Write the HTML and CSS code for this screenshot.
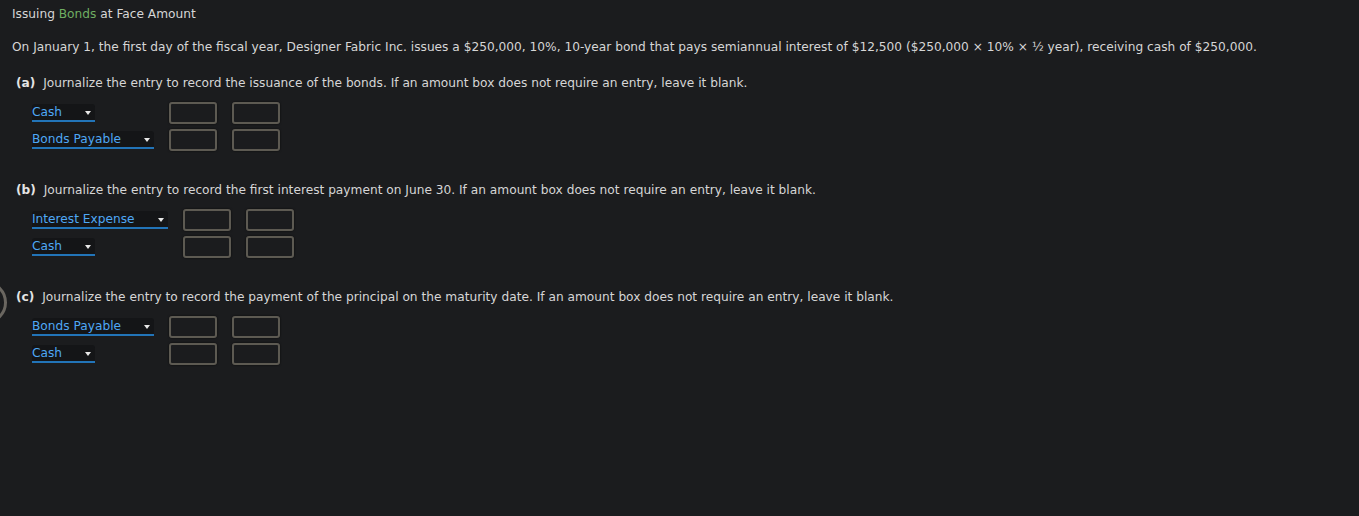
FILE: index.html
```html
<!DOCTYPE html>
<html>
<head>
<meta charset="utf-8">
<link rel="stylesheet" href="styles.css">
</head>
<body>
<div class="page">
  <div class="title">Issuing <span class="term">Bonds</span> at Face Amount</div>
  <p class="intro">On January 1, the first day of the fiscal year, Designer Fabric Inc. issues a $250,000, 10%, 10-year bond that pays semiannual interest of $12,500 ($250,000 × 10% × ½ year), receiving cash of $250,000.</p>

  <section class="part part-a">
    <div class="q"><b>(a)</b> Journalize the entry to record the issuance of the bonds. If an amount box does not require an entry, leave it blank.</div>
    <div class="journal">
      <div class="sel">Cash</div><div class="amt"></div><div class="amt"></div>
      <div class="sel">Bonds Payable</div><div class="amt"></div><div class="amt"></div>
    </div>
  </section>

  <section class="part part-b">
    <div class="q"><b>(b)</b> Journalize the entry to record the first interest payment on June 30. If an amount box does not require an entry, leave it blank.</div>
    <div class="journal">
      <div class="sel">Interest Expense</div><div class="amt"></div><div class="amt"></div>
      <div class="sel">Cash</div><div class="amt"></div><div class="amt"></div>
    </div>
  </section>

  <section class="part part-c">
    <div class="ring"></div>
    <div class="q"><b>(c)</b> Journalize the entry to record the payment of the principal on the maturity date. If an amount box does not require an entry, leave it blank.</div>
    <div class="journal">
      <div class="sel">Bonds Payable</div><div class="amt"></div><div class="amt"></div>
      <div class="sel">Cash</div><div class="amt"></div><div class="amt"></div>
    </div>
  </section>
</div>
</body>
</html>
```

FILE: styles.css
```css
html, body {
  margin: 0;
  padding: 0;
  background: #1b1c1e;
}
body {
  font-family: "DejaVu Sans", Verdana, sans-serif;
  font-size: 12.2px;
  color: #d6d6d6;
  height: 516px;
  overflow: hidden;
}
.page {
  padding: 7px 12px 0 12px;
}
.title {
  line-height: 15px;
}
.term {
  color: #6fae62;
}
.intro {
  margin: 18px 0 0 0;
  line-height: 15px;
}
.part {
  position: relative;
}
.part-a { margin-top: 21px; }
.part-b { margin-top: 32px; }
.part-c { margin-top: 32px; }
.q {
  padding-left: 4px;
  line-height: 15px;
}
.q b {
  font-weight: bold;
  color: #e4e4e4;
  margin-right: 4px;
}
.journal {
  display: grid;
  grid-template-columns: max-content 48px 48px;
  column-gap: 15px;
  row-gap: 5px;
  margin: 11px 0 0 20px;
  align-items: center;
  justify-items: start;
}
.sel {
  position: relative;
  color: #4fa8f5;
  line-height: 16px;
  padding: 0 33px 0 0;
  border-bottom: 2px solid #2274b8;
  border-radius: 3px 3px 0 0;
  background: #141517;
}
.sel::after {
  content: "";
  position: absolute;
  right: 4px;
  top: 7px;
  border-left: 3.5px solid transparent;
  border-right: 3.5px solid transparent;
  border-top: 4px solid #e8e8e8;
}
.amt {
  width: 44px;
  height: 18px;
  border: 2px solid #5d5a52;
  border-radius: 3px;
  box-shadow: 0 0 2px rgba(0,0,0,0.8);
}
.ring {
  position: absolute;
  left: -48px;
  top: -9px;
  width: 37px;
  height: 37px;
  border: 3px solid #6a6660;
  border-radius: 50%;
}
```
